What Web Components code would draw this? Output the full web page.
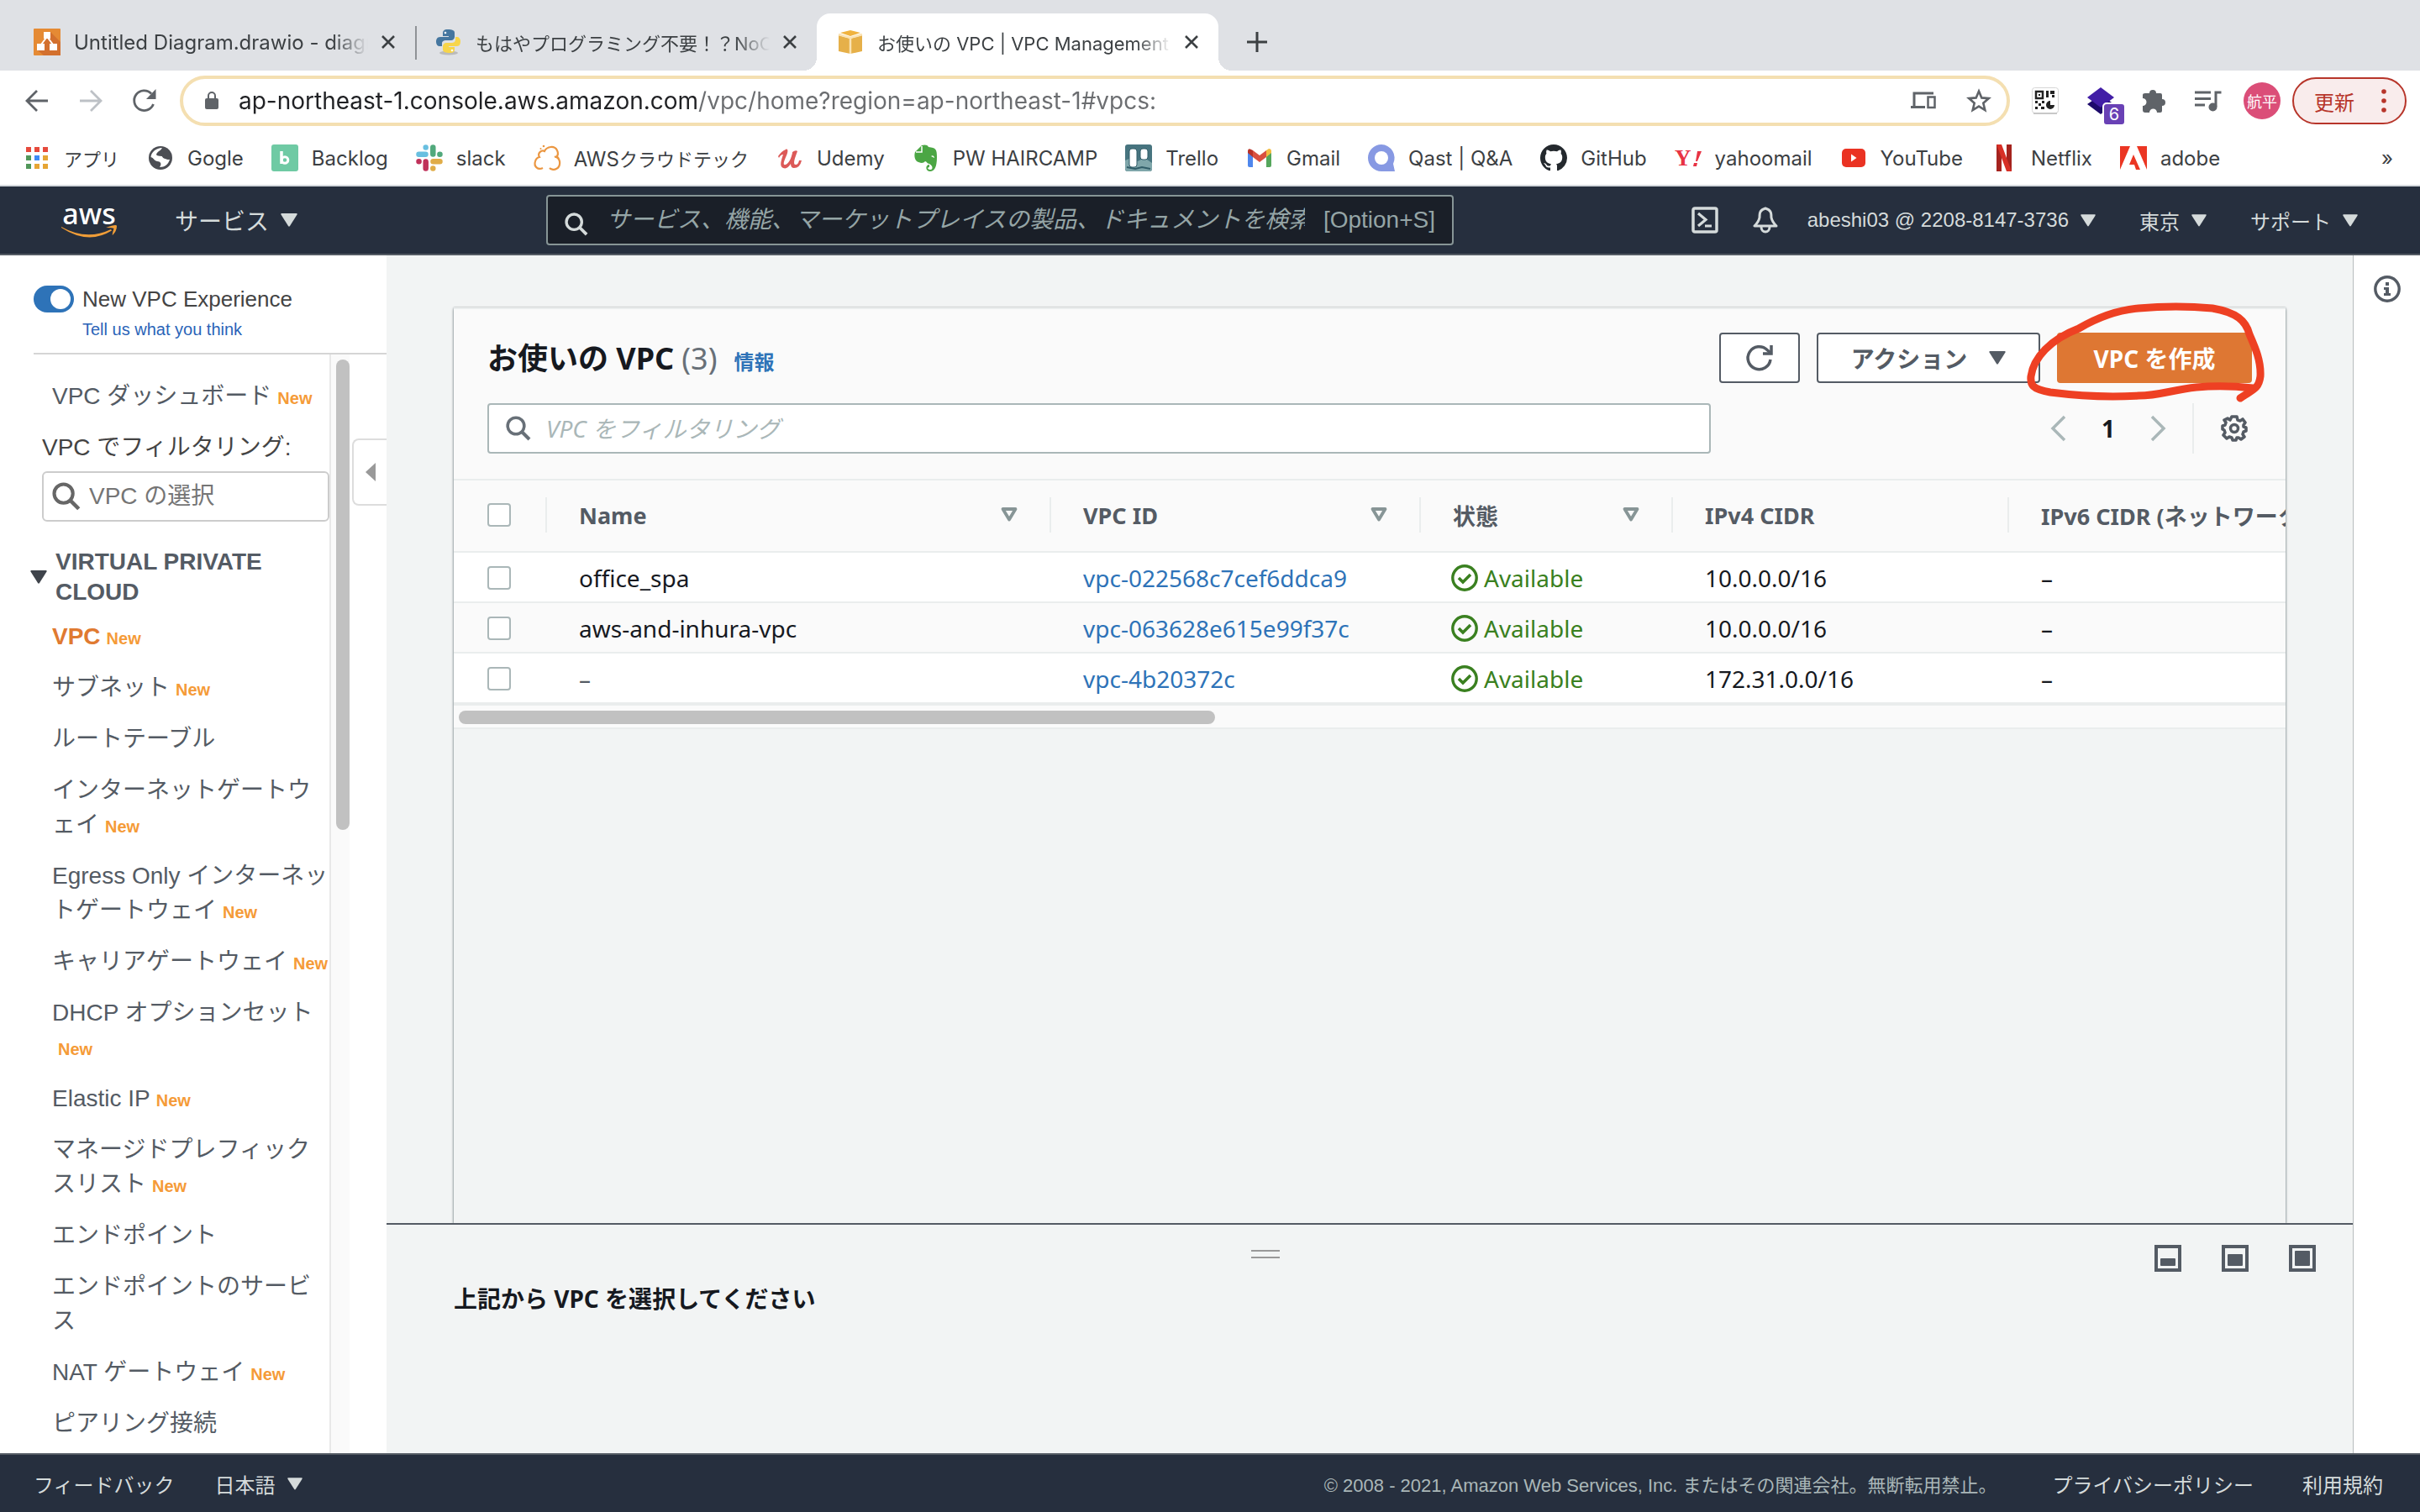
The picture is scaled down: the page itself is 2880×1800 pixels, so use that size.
<!DOCTYPE html>
<html lang="ja">
<head>
<meta charset="utf-8">
<title>お使いの VPC | VPC Management Console</title>
<style>
    body {
        margin: 0;
        background: #f2f4f4;
        font-family: "Noto Sans", "Noto Sans CJK JP", sans-serif;
        font-size: 28px;
        color: #16191f;
    }
</style>
</head>
<body>
<console-page></console-page>

<script>
/**
 * Icon shapes, each one [viewBox, markup]
 */
const ICONS = {
    close: ['0 0 16 16', '<path d="M1 1L15 15M15 1L1 15" stroke="currentColor" stroke-width="2.6" fill="none"/>'],
    plus: ['0 0 24 24', '<path d="M12 0V24M0 12H24" stroke="currentColor" stroke-width="3"/>'],
    back: ['0 0 28 28', '<path d="M27 14H3M14 2L2 14L14 26" stroke="currentColor" stroke-width="2.8" fill="none"/>'],
    forward: ['0 0 28 28', '<path d="M1 14H25M14 2L26 14L14 26" stroke="currentColor" stroke-width="2.8" fill="none"/>'],
    reload: ['0 0 28 28', '<path d="M24.500 18A11.800 11.800 0 1 1 22 5.500" stroke="currentColor" stroke-width="2.800" fill="none"/><path d="M27.500 0V12H16Z" fill="currentColor"/>'],
    lock: ['0 0 16 22', '<rect y="8" width="16" height="13" rx="2" fill="currentColor"/><path d="M4 8V5a4 4 0 0 1 8 0V8" stroke="currentColor" stroke-width="2" fill="none"/>'],
    devices: ['0 0 30 22', '<path d="M4 17V2H27M0 18.500H17" stroke="currentColor" stroke-width="3" fill="none"/><rect x="20.500" y="6.500" width="8" height="12.500" stroke="currentColor" stroke-width="2.500" fill="none"/>'],
    star: ['0 0 30 30', '<path d="M15 3.500L18.300 11.400L26.800 12.100L20.300 17.700L22.300 26L15 21.600L7.700 26L9.700 17.700L3.200 12.100L11.700 11.400Z" stroke="currentColor" stroke-width="2.600" fill="none"/>'],
    qr: ['0 0 32 32', '<rect x=".5" y=".5" width="31" height="30" rx="3" fill="#fff" stroke="#d5d5d5"/><path d="M2 31H30" stroke="#c8c8c8" stroke-width="2"/><path d="M5 5H13V13H5Z" fill="none" stroke="#222" stroke-width="2.500"/><path d="M8 8h2v2h-2zM17 4h3v8h-3zM22 4h5v4h-5zM24 9h3v3h-3zM4 16h3v3h-3zM8 19h3v3h-3zM12 16h3v3h-3zM4 23h3v3h-3zM11 23h4v3h-4z" fill="#222"/><path d="M22 16V21H27A5 5 0 1 1 22 16" fill="#222"/>'],
    cube: ['0 0 32 32', '<path d="M0 20L16 9L32 20L16 32Z" fill="#1d0a6b"/><path d="M16 0L32 12L16 24L0 12Z" fill="#421ea6"/>'],
    puzzle: ['0 0 28 28', '<path d="M3 5H8A4 4 0 0 1 16 5H21Q23 5 23 7V12A4 4 0 0 1 23 20V26Q23 28 21 28H17A4 4 0 0 0 8 28H3Q0 28 0 25V20A4 4 0 0 0 0 11V7Q0 5 3 5Z" fill="currentColor"/>'],
    music: ['0 0 32 26', '<path d="M0 3H19M0 10.500H19M0 18H12M31.500 3H25V20" stroke="currentColor" stroke-width="3" fill="none"/><circle cx="21.500" cy="20.500" r="5" fill="currentColor"/>'],
    dots: ['0 0 6 28', '<circle cx="3" cy="3" r="2.800" fill="currentColor"/><circle cx="3" cy="14" r="2.800" fill="currentColor"/><circle cx="3" cy="25" r="2.800" fill="currentColor"/>'],
    drawio: ['0 0 32 32', '<rect width="32" height="32" rx="1" fill="#e58a34"/><path d="M20 4L32 16V32H12L5 26Z" fill="#d3702e"/><path d="M15 11L9 19M17 11L23 19" stroke="#fff" stroke-width="2"/><path d="M12 4h8v8h-8zM4 18h9v8h-9zM19 18h9v8h-9z" fill="#fff"/>'],
    python: ['0 0 32 32', '<ellipse cx="16" cy="29" rx="11" ry="2.500" fill="#bbb"/><path d="M15 1C10 1 9 3 9 6V9H16V10H6C2 10 1 13 1 16S3 21 5 21H8V18C8 15 10 14 13 14H19C21 14 23 12 23 10V5C23 2 20 1 15 1Z" fill="#45769f"/><path d="M17 29C22 29 23 27 23 25V22H16V21H26C29 21 30 18 30 15S28 10 26 10H24V13C24 16 22 17 19 17H13C11 17 9 19 9 21V25C9 28 13 29 17 29Z" fill="#f7d54a"/><circle cx="12" cy="5" r="1.300" fill="#fff"/><circle cx="20" cy="26" r="1.300" fill="#fff"/>'],
    awsbox: ['0 0 32 32', '<path d="M2 8L16 12L30 8V27L16 30L2 27Z" fill="#e6b049"/><path d="M4 5L16 2L28 5L16 9Z" fill="#f0b340"/><path d="M2 7L16 11L30 7M16 11V30" stroke="#fae3b5" stroke-width="2.500" fill="none"/>'],
    apps: ['0 0 32 32', '<path d="M3 3h6v6h-6zM13 3h6v6h-6zM23 3h6v6h-6z" fill="#e64a3c"/><path d="M3 13h6v6h-6zM3 23h6v6h-6z" fill="#51975a"/><path d="M13 13h6v6h-6z" fill="#3f8af5"/><path d="M23 13h6v6h-6zM23 23h6v6h-6z" fill="#e6a534"/><path d="M13 23h6v6h-6z" fill="#e6a534"/>'],
    globe: ['0 0 32 32', '<circle cx="16" cy="16" r="14" fill="#4c4e54"/><path d="M18 4C16 8 12 8 11 12C12 15 17 12 19 15C21 18 25 17 27 18C25 24 21 27 15 27C18 23 16 20 12 20C8 19 8 16 4.500 15C5 9 11 4 18 4Z" fill="#fff"/><path d="M13 12C17 9 22 11 25 7C30 12 28 18 25 18L19 16C18 12 14 15 13 12Z" fill="#4c4e54"/>'],
    backlog: ['0 0 32 32', '<rect width="32" height="32" rx="3" fill="#6fcaa4"/><path d="M12 8V23" stroke="#fff" stroke-width="3.500"/><circle cx="16" cy="18.500" r="3.800" stroke="#fff" stroke-width="3" fill="none"/>'],
    slack: ['0 0 32 32', '<g stroke-width="6.500" stroke-linecap="round"><path d="M20.300 3.500V11.500M28.500 11.700H28.400" stroke="#51a97c"/><path d="M3.500 11.700H11.500M11.700 3.500V3.600" stroke="#68bfe0"/><path d="M11.700 20.500V28.500M3.500 20.300H3.600" stroke="#c0315a"/><path d="M20.500 20.300H28.500M20.300 28.500V28.400" stroke="#e0ac47"/></g>'],
    cloudtech: ['0 0 32 32', '<path d="M11 28C5 31 0 26 2 20C3 16 7 15 7 15C4 10 10 6 13 8C16 2 25 1 28 7C30 11 28 14 27 15C33 18 32 27 27 29C24 31 20 29 19 28M25 15C27 14 29 15 30 17" stroke="#eb9742" stroke-width="2.200" fill="none"/><circle cx="12" cy="2" r="1.300" fill="#eb9742"/><circle cx="8.500" cy="5" r="1" fill="#eb9742"/>'],
    udemy: ['0 0 32 32', '<path d="M2 14Q6 8 11 6C14 4 14 9 12 13C9 20 7 25 11 24C16 22 19 12 19 9Q23 6 25 8C22 16 19 24 23 24Q26 24 27 19L30 19Q28 28 21 28Q17 28 17 23Q13 30 8 28C3 26 6 18 8 12Q5 12 3 16Z" fill="#dc5a58"/>'],
    evernote: ['0 0 32 32', '<path d="M3 9L11 1C14 0 18 0 19 3C28 4 29 6 29 15C29 27 26 32 21 32C15 32 15 24 20 24V27C17 27 18 30 21 30C25 30 24 25 20 23C17 23 17 20 15 20C13 23 8 22 5 20C2 17 2 12 3 9Z" fill="#4ba644"/><path d="M4 9H11V2" stroke="#fff" stroke-width="1.500" fill="none"/><path d="M22 14C24 12 26 14 26 16Z" fill="#fff"/>'],
    trello: ['0 0 32 32', '<rect width="32" height="32" rx="3" fill="#47747f"/><path d="M0 19L7 16L15 20L23 16L32 22V29Q32 32 29 32H3Q0 32 0 29Z" fill="#7fa6aa"/><path d="M2 27L12 29L20 27L30 29" stroke="#315d68" stroke-width="2" fill="none"/><rect x="5" y="5" width="9" height="22" rx="3" fill="#fff" stroke="#315d68"/><rect x="18" y="5" width="9" height="13" rx="3" fill="#fff" stroke="#315d68"/>'],
    gmail: ['0 0 32 32', '<path d="M2 9L8 13V27H4Q2 27 2 25Z" fill="#4f87ed"/><path d="M24 13L30 9V25Q30 27 28 27H24Z" fill="#55a65c"/><path d="M24 7L27 5Q30 5 30 8V10L24 15Z" fill="#f2bd42"/><path d="M2 10V8Q2 4 6 6L8 7V15Z" fill="#b93228"/><path d="M8 7L16 13L24 7V15L16 21L8 15Z" fill="#d95040"/>'],
    qast: ['0 0 32 32', '<path d="M16 0A16 16 0 0 1 30 23L32 32H16A16 16 0 0 1 16 0Z" fill="#8799e3"/><ellipse cx="16" cy="16" rx="8" ry="8" fill="#fff"/>'],
    github: ['0 0 16 16', '<path fill="#24292e" fill-rule="evenodd" d="M8 0C3.580 0 0 3.580 0 8c0 3.540 2.290 6.530 5.470 7.590.4.070.55-.17.55-.38 0-.19-.010-.82-.010-1.490-2.010.37-2.530-.49-2.690-.94-.090-.23-.48-.94-.82-1.130-.28-.15-.68-.52-.010-.53.63-.010 1.080.58 1.230.82.72 1.210 1.870.87 2.330.66.070-.52.28-.87.51-1.070-1.780-.2-3.640-.89-3.640-3.950 0-.87.31-1.590.82-2.150-.080-.2-.36-1.020.080-2.120 0 0 .67-.21 2.200.82.64-.18 1.320-.27 2-.27s1.360.090 2 .27c1.530-1.040 2.200-.82 2.200-.82.44 1.100.16 1.920.080 2.120.51.56.82 1.270.82 2.150 0 3.070-1.870 3.750-3.650 3.950.29.25.54.73.54 1.480 0 1.070-.010 1.930-.010 2.200 0 .21.15.46.55.38A8.010 8.010 0 0 0 16 8c0-4.420-3.580-8-8-8z"/>'],
    yahoo: ['0 0 32 32', '<text x="0" y="25" font-family="Liberation Serif, serif" font-size="27" font-weight="700" fill="#e83344">Y</text><path d="M27 8H32L27 20H25ZM23 22h4l-1 4h-4z" fill="#e83344"/>'],
    youtube: ['0 0 32 32', '<rect x="2" y="5" width="28" height="22" rx="5" fill="#ea3323"/><path d="M13 11.500L19.500 16L13 20.500Z" fill="#fff"/>'],
    netflix: ['0 0 32 32', '<path d="M7 0h6v32h-6zM19 0h6v32h-6z" fill="#a5231e"/><path d="M7 0H13L25 32H19Z" fill="#d72f26"/>'],
    adobe: ['0 0 32 32', '<path d="M0 2H12L0 30ZM20 2H32V30ZM16 12L24 30H19L17 24H11Z" fill="#eb3623"/>'],
    caret: ['0 0 20 16', '<path d="M1 0H19Q20 0 19.500 1.500L11 15Q10 16.500 9 15L.5 1.500Q0 0 1 0Z" fill="currentColor"/>'],
    smile: ['0 0 66 16', '<path d="M0 2Q30 19 59 5L60 6.500Q32 24 0 3Z" fill="#ef9d38"/><path d="M53 3Q66-2 66 1Q66 7 61 12Q60 12 62.500 4Q60 3 53 3Z" fill="#ef9d38"/>'],
    search: ['0 0 30 30', '<circle cx="12" cy="12" r="9.800" stroke="currentColor" stroke-width="3.600" fill="none"/><path d="M19 19L28 28" stroke="currentColor" stroke-width="4"/>'],
    shell: ['0 0 32 32', '<rect x="2" y="2" width="28" height="28" rx="2" stroke="currentColor" stroke-width="3.500" fill="none"/><path d="M8 8L17 15.500L8 23M16 23H24" stroke="currentColor" stroke-width="3.200" fill="none"/>'],
    bell: ['0 0 32 32', '<path d="M16 2C9 4 9 8 9 13Q8 18 3 23H29Q24 18 23 13C23 8 23 4 16 2Z" stroke="currentColor" stroke-width="3" fill="none" stroke-linejoin="round"/><path d="M11 24C11 32 21 32 21 24" stroke="currentColor" stroke-width="3" fill="none"/>'],
    info: ['0 0 32 32', '<circle cx="16" cy="16" r="14.200" stroke="currentColor" stroke-width="3.400" fill="none"/><path d="M14 8h4v4h-4zM12 14h6v7h2v3h-8v-3h2v-4h-2z" fill="currentColor"/>'],
    collapse: ['0 0 12 22', '<path d="M12 0V22L0 11Z" fill="#999"/>'],
    refresh: ['0 0 32 32', '<path d="M29 18A13.500 13.500 0 1 1 25 6.500L29 10" stroke="currentColor" stroke-width="3.500" fill="none"/><path d="M30 1V11H20" stroke="currentColor" stroke-width="3.500" fill="none"/>'],
    prev: ['0 0 18 30', '<path d="M16 1L2 15L16 29" stroke="currentColor" stroke-width="3.500" fill="none"/>'],
    next: ['0 0 18 30', '<path d="M2 1L16 15L2 29" stroke="currentColor" stroke-width="3.500" fill="none"/>'],
    gear: ['0 0 32 32', '<path d="M13 2H19L20 6L23 7L26 5L29 9L27 12V14L30 15V19L27 20L26 23L28 26L24 29L21 27L19 27L18 30H14L13 27L10 26L7 28L3 24L5 21L4 18L2 17V13L5 12L6 9L4 6L8 4L11 6Z" stroke="currentColor" stroke-width="3.600" fill="none" stroke-linejoin="round"/><circle cx="16" cy="16" r="4.500" stroke="currentColor" stroke-width="3.500" fill="none"/>'],
    sort: ['0 0 20 18', '<path d="M2.500 2H17.500L10 14.500Z" stroke="currentColor" stroke-width="3.800" fill="none" stroke-linejoin="round"/>'],
    ok: ['0 0 32 32', '<circle cx="16" cy="16" r="14.200" stroke="currentColor" stroke-width="3.400" fill="none"/><path d="M9 16L14 21L23 12" stroke="currentColor" stroke-width="3.600" fill="none"/>'],
    panelLow: ['0 0 32 32', '<rect x="2" y="2" width="28" height="28" stroke="currentColor" stroke-width="4" fill="none"/><rect x="7" y="16" width="18" height="9" rx="1" fill="currentColor"/>'],
    panelMid: ['0 0 32 32', '<rect x="2" y="2" width="28" height="28" stroke="currentColor" stroke-width="4" fill="none"/><rect x="7" y="11" width="18" height="14" rx="1" fill="currentColor"/>'],
    panelFull: ['0 0 32 32', '<rect x="2" y="2" width="28" height="28" stroke="currentColor" stroke-width="4" fill="none"/><rect x="7" y="7" width="18" height="18" rx="1" fill="currentColor"/>'],
};

const BASE = `
    :host, * { box-sizing: border-box; }
    button, input { font: inherit; color: inherit; margin: 0; padding: 0; border: 0; background: none; outline: none; }
    a { color: inherit; text-decoration: none; }
    button { display: flex; align-items: center; white-space: nowrap; }
`;

class BaseElement extends HTMLElement {
    constructor() {
        super();
        this.attachShadow({ mode: 'open' });
    }

    connectedCallback() {
        this.shadowRoot.innerHTML = `<style>${BASE}${this.styles()}</style>${this.markup()}`;
    }
}

// <ui-icon name="close" w="16" h="16">
class UiIcon extends BaseElement {
    styles() {
        return `:host { display: block; flex: none; } svg { display: block; overflow: visible; }`;
    }

    markup() {
        const [box, shape] = ICONS[this.getAttribute('name')];
        const w = this.getAttribute('w') || 32;
        const h = this.getAttribute('h') || w;
        return `<svg width="${w}" height="${h}" viewBox="${box}" aria-hidden="true">${shape}</svg>`;
    }
}

class BrowserTab extends BaseElement {
    styles() {
        return `
            :host { display: flex; align-items: center; gap: 16px; width: 478px; height: 68px; padding: 0 24px; position: relative; }
            :host([active]) { background: #fff; border-radius: 16px 16px 0 0; }
            :host([active])::before, :host([active])::after { content: ""; position: absolute; bottom: 0; width: 16px; height: 16px; }
            :host([active])::before { left: -16px; background: radial-gradient(circle at 0 0, #dfe1e5 16px, #fff 16px); }
            :host([active])::after { right: -16px; background: radial-gradient(circle at 100% 0, #dfe1e5 16px, #fff 16px); }
            :host([divider])::after { content: ""; position: absolute; right: -2px; top: 15px; width: 2px; height: 40px; background: #8f9296; }
            .title { flex: 1; overflow: hidden; white-space: nowrap; mask-image: linear-gradient(90deg, #000 88%, transparent); }
        `;
    }

    markup() {
        return `
            <ui-icon name="${this.getAttribute('icon')}"></ui-icon>
            <span class="title"><slot></slot></span>
            <button aria-label="閉じる"><ui-icon name="close" w="16"></ui-icon></button>
        `;
    }
}

class BookmarkItem extends BaseElement {
    styles() {
        return `:host { display: block; } a { display: flex; align-items: center; gap: 16px; white-space: nowrap; }`;
    }

    markup() {
        return `<a href="#"><ui-icon name="${this.getAttribute('icon')}"></ui-icon><slot></slot></a>`;
    }
}

class BrowserChrome extends BaseElement {
    styles() {
        return `
            :host { display: block; background: #fff; color: #3c4043; font-family: Inter, "Noto Sans CJK JP", sans-serif; font-size: 24px; border-bottom: 2px solid #d5d9de; }
            .kana { font-size: 22px; }
            .strip { display: flex; align-items: flex-end; height: 84px; padding-left: 16px; background: #dfe1e5; }
            .strip > button { height: 68px; margin-left: 34px; }
            .bar { display: flex; align-items: center; height: 72px; padding: 0 16px 0 30px; color: #5f6368; }
            .bar > button { margin-right: 36px; }
            .off { color: #bdc1c6; }
            .url { flex: 1; display: flex; align-items: center; height: 60px; margin-right: 26px; padding: 0 18px 0 26px; border: 4px solid #f4dfb1; border-radius: 30px; margin-left: -8px; }
            .url input { flex: 1; height: 48px; margin-left: 24px; font-size: 28px; color: transparent; background: linear-gradient(90deg, #202124 546px, #6b6d70 546px) text; }
            .url button + button { margin-left: 36px; }
            .ext { display: flex; align-items: center; gap: 34px; }
            .boxes { position: relative; }
            .badge { position: absolute; left: 18px; top: 18px; width: 28px; height: 28px; border: 2px solid #fff; border-radius: 5px; background: #6941b5; color: #fff; font-size: 20px; line-height: 24px; text-align: center; }
            .avatar { justify-content: center; width: 44px; height: 44px; margin-left: -8px; border-radius: 50%; background: #db4e78; color: #fff; font-size: 18px; }
            .update { gap: 32px; height: 56px; margin-left: -20px; padding: 0 22px 0 24px; border: 2px solid #b7352a; border-radius: 28px; background: #f9ecec; color: #b7352a; }
            .marks { display: flex; align-items: center; gap: 33px; height: 64px; padding: 0 32px 0 28px; }
            .more { margin-left: auto; }
        `;
    }

    markup() {
        const marks = [
            ['apps', 'アプリ'], ['globe', 'Gogle'], ['backlog', 'Backlog'], ['slack', 'slack'],
            ['cloudtech', 'AWS<span class="kana">クラウドテック</span>'], ['udemy', 'Udemy'], ['evernote', 'PW HAIRCAMP'],
            ['trello', 'Trello'], ['gmail', 'Gmail'], ['qast', 'Qast | Q&amp;A'], ['github', 'GitHub'],
            ['yahoo', 'yahoomail'], ['youtube', 'YouTube'], ['netflix', 'Netflix'], ['adobe', 'adobe'],
        ];
        return `
            <div class="strip">
                <browser-tab icon="drawio" divider>Untitled Diagram.drawio - diagrams.net</browser-tab>
                <browser-tab icon="python" class="kana">もはやプログラミング不要！？NoCode</browser-tab>
                <browser-tab icon="awsbox" active class="kana">お使いの VPC | VPC Management Console</browser-tab>
                <button aria-label="新しいタブ"><ui-icon name="plus" w="24"></ui-icon></button>
            </div>
            <div class="bar">
                <button aria-label="戻る"><ui-icon name="back" w="28"></ui-icon></button>
                <button class="off" aria-label="進む"><ui-icon name="forward" w="28"></ui-icon></button>
                <button aria-label="再読み込み"><ui-icon name="reload" w="28"></ui-icon></button>
                <div class="url">
                    <ui-icon name="lock" w="16" h="22"></ui-icon>
                    <input aria-label="アドレス" value="ap-northeast-1.console.aws.amazon.com/vpc/home?region=ap-northeast-1#vpcs:">
                    <button aria-label="デバイスに送信"><ui-icon name="devices" w="30" h="22"></ui-icon></button>
                    <button aria-label="ブックマーク"><ui-icon name="star" w="30"></ui-icon></button>
                </div>
                <div class="ext">
                    <button aria-label="QR"><ui-icon name="qr"></ui-icon></button>
                    <button class="boxes" aria-label="拡張"><ui-icon name="cube"></ui-icon><span class="badge">6</span></button>
                    <button aria-label="拡張機能"><ui-icon name="puzzle" w="28"></ui-icon></button>
                    <button aria-label="メディア"><ui-icon name="music" w="32" h="26"></ui-icon></button>
                    <button class="avatar">航平</button>
                    <button class="update">更新<ui-icon name="dots" w="6" h="28"></ui-icon></button>
                </div>
            </div>
            <div class="marks">
                ${marks.map(([icon, text]) => `<bookmark-item icon="${icon}"${icon === 'apps' ? ' class="kana"' : ''}><span>${text}</span></bookmark-item>`).join('')}
                <button class="more">»</button>
            </div>
        `;
    }
}

class AwsHeader extends BaseElement {
    styles() {
        return `
            :host { display: flex; align-items: center; height: 82px; padding: 0 74px 0 73px; border-bottom: 2px solid #545b64; background: #262f3e; color: #d5dbdb; font-family: "Liberation Sans", "Noto Sans CJK JP", sans-serif; font-size: 24px; }
            .logo { width: 66px; margin-right: 69px; color: #fff; font: 500 34px/28px "Noto Sans", sans-serif; text-align: center; }
            .logo span { display: block; }
            .services { width: 442px; gap: 14px; font-size: 28px; }
            .search { display: flex; align-items: center; flex: 0 1 1080px; height: 60px; padding: 0 20px; border: 2px solid #879596; border-radius: 4px; background: #1a1f28; font-size: 28px; }
            .search ui-icon { margin-top: 10px; }
            .search input { flex: 1; min-width: 0; height: 52px; margin: 0 22px; }
            .search input::placeholder { color: #95a5a6; font-style: italic; opacity: 1; }
            .search span { color: #95a5a6; }
            .right { display: flex; align-items: center; margin-left: auto; gap: 52px; }
            .right button { gap: 14px; }
            .icons { display: flex; gap: 40px; margin-right: -18px; }
        `;
    }

    markup() {
        return `
            <a class="logo" href="#"><span>aws</span><ui-icon name="smile" w="66" h="16"></ui-icon></a>
            <button class="services">サービス<ui-icon name="caret" w="20" h="16"></ui-icon></button>
            <label class="search">
                <ui-icon name="search" w="28"></ui-icon>
                <input placeholder="サービス、機能、マーケットプレイスの製品、ドキュメントを検索">
                <span>[Option+S]</span>
            </label>
            <div class="right">
                <div class="icons">
                    <button aria-label="CloudShell"><ui-icon name="shell"></ui-icon></button>
                    <button aria-label="通知"><ui-icon name="bell"></ui-icon></button>
                </div>
                <button>abeshi03 @ 2208-8147-3736<ui-icon name="caret" w="18" h="15"></ui-icon></button>
                <button>東京<ui-icon name="caret" w="18" h="15"></ui-icon></button>
                <button>サポート<ui-icon name="caret" w="18" h="15"></ui-icon></button>
            </div>
        `;
    }
}

class SideLink extends BaseElement {
    styles() {
        return `
            :host { display: block; margin: 0 0 20px 62px; line-height: 41px; }
            :host([current]) a { color: #e07a31; font-weight: 700; }
            .new { display: inline-block; margin-left: 7px; color: #f59b38; font-size: 20px; font-weight: 700; line-height: 24px; }
        `;
    }

    markup() {
        return `<a href="#"><slot></slot>${this.hasAttribute('new') ? '<span class="new">New</span>' : ''}</a>`;
    }
}

class VpcSidebar extends BaseElement {
    styles() {
        return `
            :host { display: flex; flex-direction: column; flex: none; width: 460px; background: #fff; color: #545b64; font-family: "Liberation Sans", "Noto Sans CJK JP", sans-serif; font-size: 28px; }
            header { height: 118px; margin-left: 40px; padding-top: 34px; border-bottom: 2px solid #d5d5d5; color: #444; }
            .toggle { display: flex; align-items: center; gap: 10px; font-size: 26px; line-height: 36px; }
            .toggle input { appearance: none; display: flex; align-items: center; justify-content: flex-end; width: 48px; height: 32px; padding: 4px; border-radius: 16px; background: #2e73b8; }
            .toggle input::before { content: ""; width: 24px; height: 24px; border-radius: 50%; background: #fff; }
            header a { display: block; margin-left: 58px; padding-top: 6px; color: #2a64b8; font-size: 20px; line-height: 24px; }
            .body { display: flex; flex: 1; align-items: stretch; }
            nav { width: 392px; padding-top: 29px; }
            nav > :last-child { margin-bottom: 0; }
            .filter { display: block; margin-left: 50px; color: #444; line-height: 41px; }
            .box { display: flex; align-items: center; gap: 10px; height: 60px; margin: 8px 0 30px; padding: 0 10px; border: 2px solid #ccc; border-radius: 6px; color: #666; }
            .box input { flex: 1; min-width: 0; height: 50px; }
            .box input::placeholder { color: #757575; opacity: 1; }
            h3 { display: flex; align-items: center; gap: 10px; margin: 0 60px 14px 36px; font-size: 28px; line-height: 36px; }
            h3 ui-icon { color: #3f444b; }
            .track { width: 24px; border-left: 2px solid #e8e8e8; padding: 6px 0 0 6px; background: #fafafa; }
            .thumb { height: 560px; border-radius: 8px; background: #c1c1c1; }
            .fold { justify-content: center; width: 41px; height: 80px; margin: 100px 0 0 3px; border: 2px solid #ddd; border-right: 0; border-radius: 8px 0 0 8px; }
        `;
    }

    markup() {
        return `
            <header>
                <label class="toggle"><input type="checkbox" role="switch" checked>New VPC Experience</label>
                <a href="#">Tell us what you think</a>
            </header>
            <div class="body">
                <nav>
                    <side-link new>VPC ダッシュボード</side-link>
                    <label class="filter">VPC でフィルタリング:
                        <span class="box"><ui-icon name="search" w="34"></ui-icon><input placeholder="VPC の選択"></span>
                    </label>
                    <h3><ui-icon name="caret" w="20" h="16"></ui-icon>VIRTUAL PRIVATE CLOUD</h3>
                    <side-link new current>VPC</side-link>
                    <side-link new>サブネット</side-link>
                    <side-link>ルートテーブル</side-link>
                    <side-link new>インターネットゲートウェイ</side-link>
                    <side-link new>Egress Only インターネットゲートウェイ</side-link>
                    <side-link new>キャリアゲートウェイ</side-link>
                    <side-link new>DHCP オプションセット</side-link>
                    <side-link new>Elastic IP</side-link>
                    <side-link new>マネージドプレフィックスリスト</side-link>
                    <side-link>エンドポイント</side-link>
                    <side-link>エンドポイントのサービス</side-link>
                    <side-link new>NAT ゲートウェイ</side-link>
                    <side-link>ピアリング接続</side-link>
                </nav>
                <div class="track"><div class="thumb"></div></div>
                <button class="fold" aria-label="折りたたむ"><ui-icon name="collapse" w="12" h="22"></ui-icon></button>
            </div>
        `;
    }
}

class VpcTable extends BaseElement {
    styles() {
        return `
            :host { display: block; overflow: hidden; border-bottom: 2px solid #eaeded; background: #fafafa; }
            table { table-layout: fixed; width: 2600px; border-collapse: separate; border-spacing: 0; }
            th, td { padding: 0; text-align: left; white-space: nowrap; border-bottom: 2px solid #eaeded; }
            th { height: 88px; padding-bottom: 2px; border-top: 2px solid #eaeded; color: #545b64; font-size: 27px; }
            td { height: 60px; padding: 2px 0 0 40px; background: #fff; line-height: 40px; }
            tr:nth-child(even) td { background: #fafafa; }
            tr:last-child td { height: 62px; border-bottom-width: 4px; }
            th > div { display: flex; align-items: center; justify-content: space-between; height: 42px; padding: 0 38px; border-left: 2px solid #eaeded; }
            th ui-icon { color: #879596; }
            input { appearance: none; display: block; width: 28px; height: 28px; border: 2px solid #aab7b8; border-radius: 4px; background: #fff; }
            th input { margin-left: 40px; }
            td a { color: #2e73b8; }
            .state { display: flex; align-items: center; gap: 7px; margin-left: -2px; color: #3a8020; }
            .none { color: #545b64; }
            .thumb { width: 900px; height: 16px; margin: 6px 0 4px 6px; border-radius: 8px; background: #c1c1c1; }
        `;
    }

    markup() {
        const cols = [['Name', 1], ['VPC ID', 1], ['状態', 1], ['IPv4 CIDR', 0], ['IPv6 CIDR (ネットワークボーダーグループ)', 0]];
        const rows = [
            ['office_spa', 'vpc-022568c7cef6ddca9', '10.0.0.0/16'],
            ['aws-and-inhura-vpc', 'vpc-063628e615e99f37c', '10.0.0.0/16'],
            ['–', 'vpc-4b20372c', '172.31.0.0/16'],
        ];
        return `
            <table>
                <colgroup><col width="109"><col width="600"><col width="440"><col width="300"><col width="400"><col></colgroup>
                <thead><tr>
                    <th><input type="checkbox" aria-label="すべて選択"></th>
                    ${cols.map(([text, sort]) => `<th><div>${text}${sort ? '<ui-icon name="sort" w="20" h="18"></ui-icon>' : ''}</div></th>`).join('')}
                </tr></thead>
                <tbody>
                    ${rows.map(([name, id, cidr]) => `<tr>
                        <td><input type="checkbox" aria-label="${id}"></td>
                        <td class="${name === '–' ? 'none' : ''}">${name}</td>
                        <td><a href="#">${id}</a></td>
                        <td><span class="state"><ui-icon name="ok"></ui-icon>Available</span></td>
                        <td>${cidr}</td>
                        <td>–</td>
                    </tr>`).join('')}
                </tbody>
            </table>
            <div class="thumb"></div>
        `;
    }
}

class VpcPanel extends BaseElement {
    styles() {
        return `
            :host { display: block; flex: 1; margin: 62px 80px 0; border-top: 2px solid #eaeded; box-shadow: 0 2px 3px rgba(0, 28, 36, .5), 0 0 2px rgba(0, 28, 36, .3); background: #f2f4f4; }
            .head { display: flex; flex-wrap: wrap; align-items: center; justify-content: space-between; gap: 24px 0; padding: 28px 40px 30px; background: #fafafa; }
            h1 { display: flex; align-items: baseline; margin: 0; padding-top: 6px; font-size: 36px; line-height: 48px; }
            h1 span { margin-left: 9px; color: #687078; font-weight: 400; }
            h1 a { margin-left: 20px; color: #2e73b8; font-size: 24px; }
            .actions { display: flex; gap: 20px; color: #545b64; font-weight: 700; }
            .actions button { justify-content: center; height: 60px; border: 2px solid #545b64; border-radius: 4px; background: #fff; }
            .refresh { width: 96px; }
            .menu { width: 266px; gap: 26px; }
            .create { position: relative; }
            .actions .create button { width: 232px; border: 0; background: #de7733; color: #fff; }
            /* hand drawn ring over the button */
            .create svg { position: absolute; left: -44px; top: -40px; pointer-events: none; }
            .filter { display: flex; align-items: center; gap: 18px; flex: 0 1 1456px; height: 60px; padding: 0 20px; border: 2px solid #aab7b8; border-radius: 4px; background: #fff; color: #687078; }
            .filter input { flex: 1; height: 50px; }
            .filter input::placeholder { color: #aab7b8; font-style: italic; opacity: 1; }
            .pager { display: flex; align-items: center; height: 60px; color: #aab7b8; }
            .pager b { margin: 0 42px; color: #16191f; }
            .pager .gear { height: 60px; margin-left: 32px; padding: 0 5px 0 32px; border-left: 2px solid #eaeded; color: #545b64; }
        `;
    }

    markup() {
        return `
            <div class="head">
                <h1>お使いの VPC <span>(3)</span><a href="#">情報</a></h1>
                <div class="actions">
                    <button class="refresh" aria-label="更新"><ui-icon name="refresh"></ui-icon></button>
                    <button class="menu">アクション<ui-icon name="caret" w="20" h="16"></ui-icon></button>
                    <div class="create">
                        <button>VPC を作成</button>
                        <svg width="300" height="130" viewBox="2404 356 300 130" fill="none" stroke="#ee4023" stroke-width="9" stroke-linecap="round" stroke-linejoin="round">
                            <path d="M2681 462Q2646 458 2614 461C2585 464 2570 471 2545 471Q2495 474 2440 467C2418 463 2416 458 2417 448C2420 426 2440 404 2474 391Q2510 370 2545 367Q2590 363 2633 367C2662 372 2673 382 2677 398C2684 414 2691 430 2690 448C2688 464 2680 464 2666 474"/>
                        </svg>
                    </div>
                </div>
                <label class="filter"><ui-icon name="search" w="30"></ui-icon><input placeholder="VPC をフィルタリング"></label>
                <div class="pager">
                    <button aria-label="前へ"><ui-icon name="prev" w="18" h="30"></ui-icon></button>
                    <b>1</b>
                    <button aria-label="次へ"><ui-icon name="next" w="18" h="30"></ui-icon></button>
                    <button class="gear" aria-label="設定"><ui-icon name="gear"></ui-icon></button>
                </div>
            </div>
            <vpc-table></vpc-table>
        `;
    }
}

class SplitPanel extends BaseElement {
    styles() {
        return `
            :host { display: block; position: relative; height: 274px; padding-top: 24px; border-top: 2px solid #545b64; background: #f2f4f4; }
            .bar { display: grid; grid-template-columns: 1029fr 34px 1233fr; height: 32px; padding-right: 44px; color: #545b64; }
            .grip { height: 10px; margin-top: 6px; border: 2px solid #999; border-width: 2px 0; }
            .sizes { display: flex; justify-content: flex-end; gap: 48px; }
            h2 { margin: 12px 0 0 80px; font-size: 28px; line-height: 40px; }
        `;
    }

    markup() {
        return `
            <div class="bar">
                <span></span>
                <div class="grip"></div>
                <div class="sizes">
                    <button aria-label="小"><ui-icon name="panelLow"></ui-icon></button>
                    <button aria-label="中"><ui-icon name="panelMid"></ui-icon></button>
                    <button aria-label="大"><ui-icon name="panelFull"></ui-icon></button>
                </div>
            </div>
            <h2>上記から VPC を選択してください</h2>
        `;
    }
}

class AwsFooter extends BaseElement {
    styles() {
        return `
            :host { display: flex; align-items: center; gap: 48px; height: 70px; padding: 0 44px 0 40px; border-top: 2px solid #545b64; background: #262f3e; color: #d5dbdb; font-family: "Liberation Sans", "Noto Sans CJK JP", sans-serif; font-size: 24px; white-space: nowrap; }
            button { gap: 14px; }
            small { margin: 0 18px 0 auto; color: #aab7b8; font-size: 22px; }
            a:last-child { margin-left: 10px; }
        `;
    }

    markup() {
        return `
            <a href="#">フィードバック</a>
            <button>日本語<ui-icon name="caret" w="18" h="15"></ui-icon></button>
            <small>© 2008 - 2021, Amazon Web Services, Inc. またはその関連会社。無断転用禁止。</small>
            <a href="#">プライバシーポリシー</a>
            <a href="#">利用規約</a>
        `;
    }
}

class ConsolePage extends BaseElement {
    styles() {
        return `
            :host { display: flex; flex-direction: column; min-height: 100vh; }
            .middle { display: flex; flex: 1; }
            main { display: flex; flex-direction: column; flex: 1; min-width: 0; }
            aside { width: 80px; padding: 24px; border-left: 1px solid #b8bcbd; background: #fff; color: #545b64; }
        `;
    }

    markup() {
        return `
            <browser-chrome></browser-chrome>
            <aws-header></aws-header>
            <div class="middle">
                <vpc-sidebar></vpc-sidebar>
                <main>
                    <vpc-panel></vpc-panel>
                    <split-panel></split-panel>
                </main>
                <aside><button aria-label="情報"><ui-icon name="info"></ui-icon></button></aside>
            </div>
            <aws-footer></aws-footer>
        `;
    }
}

customElements.define('ui-icon', UiIcon);
customElements.define('browser-tab', BrowserTab);
customElements.define('bookmark-item', BookmarkItem);
customElements.define('browser-chrome', BrowserChrome);
customElements.define('aws-header', AwsHeader);
customElements.define('side-link', SideLink);
customElements.define('vpc-sidebar', VpcSidebar);
customElements.define('vpc-table', VpcTable);
customElements.define('vpc-panel', VpcPanel);
customElements.define('split-panel', SplitPanel);
customElements.define('aws-footer', AwsFooter);
customElements.define('console-page', ConsolePage);
</script>
</body>
</html>
